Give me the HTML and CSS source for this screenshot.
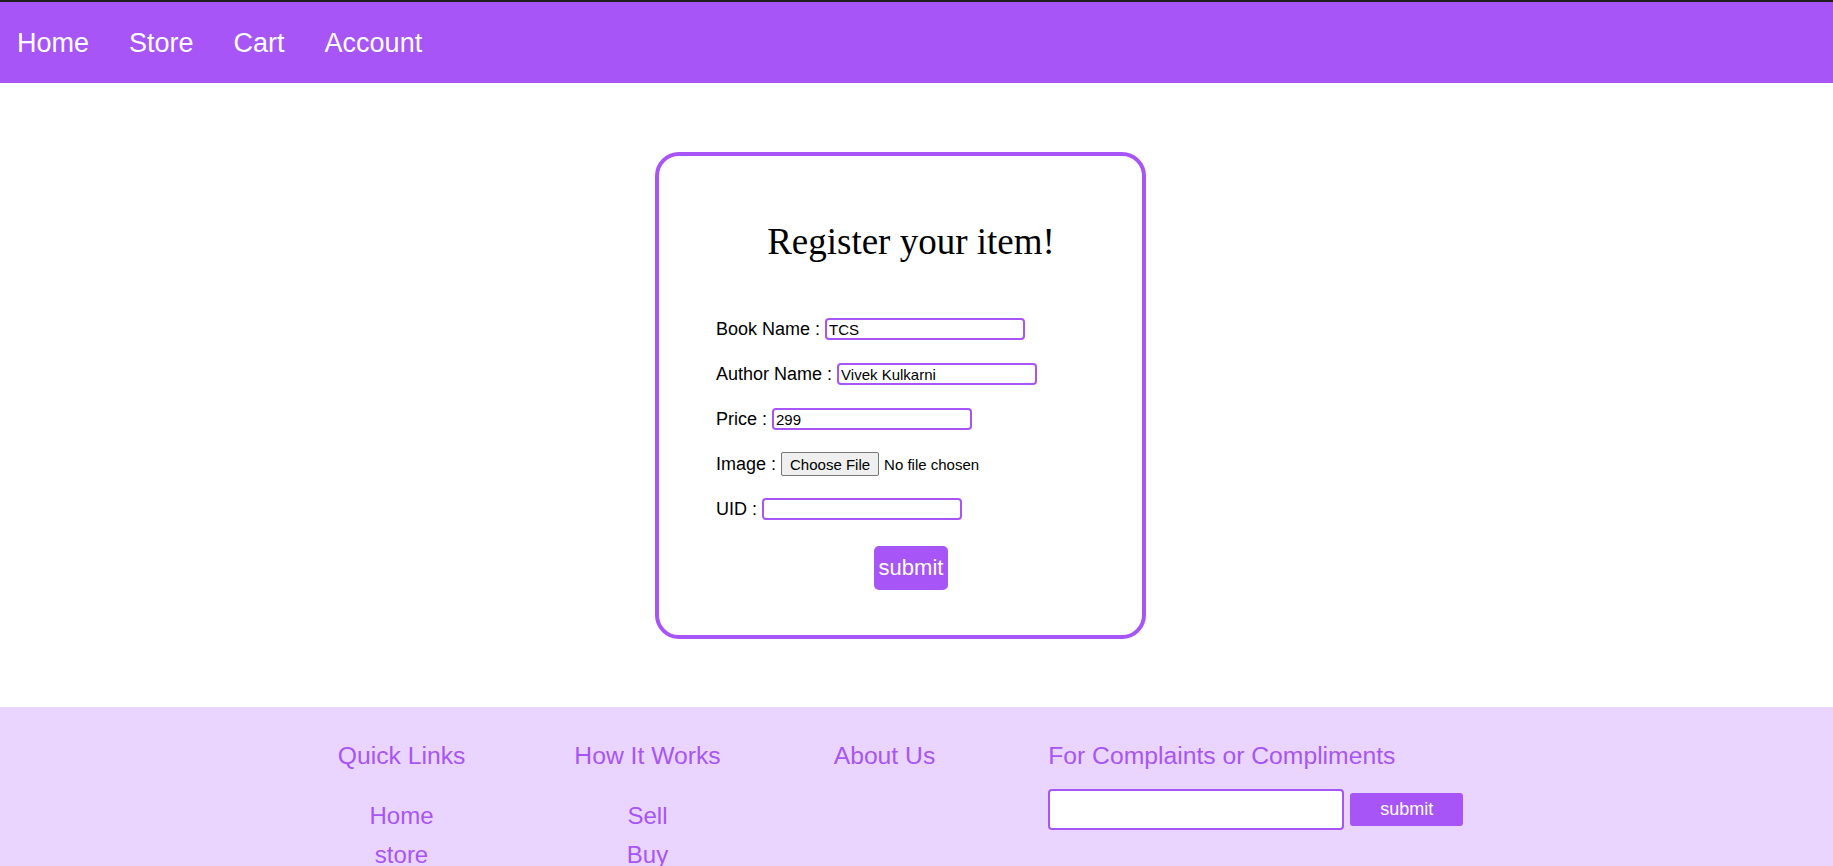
FILE: index.html
```html
<!DOCTYPE html>
<html lang="en">
<head>
<meta charset="utf-8">
<title>Register your item</title>
<link rel="stylesheet" href="styles.css">
</head>
<body>
<nav class="topnav">
  <a href="#" class="nav-link">Home</a>
  <a href="#" class="nav-link">Store</a>
  <a href="#" class="nav-link">Cart</a>
  <a href="#" class="nav-link">Account</a>
</nav>

<main class="main">
  <form class="card">
    <h2 class="card-title">Register your item!</h2>
    <div class="row"><label class="lbl">Book Name :</label><input class="field" type="text" value="TCS"></div>
    <div class="row"><label class="lbl">Author Name :</label><input class="field" type="text" value="Vivek Kulkarni"></div>
    <div class="row"><label class="lbl">Price :</label><input class="field" type="text" value="299"></div>
    <div class="row"><label class="lbl">Image :</label><input class="file" type="file"></div>
    <div class="row"><label class="lbl">UID :</label><input class="field" type="text" value=""></div>
    <div class="actions"><button class="btn-submit" type="button">submit</button></div>
  </form>
</main>

<footer class="footer">
  <div class="fcol fcol-1">
    <h3 class="fhead">Quick Links</h3>
    <ul class="flist">
      <li><a href="#" class="flink">Home</a></li>
      <li><a href="#" class="flink">store</a></li>
    </ul>
  </div>
  <div class="fcol fcol-2">
    <h3 class="fhead">How It Works</h3>
    <ul class="flist">
      <li><a href="#" class="flink">Sell</a></li>
      <li><a href="#" class="flink">Buy</a></li>
    </ul>
  </div>
  <div class="fcol fcol-3">
    <h3 class="fhead">About Us</h3>
  </div>
  <div class="fcol fcol-4">
    <h3 class="fhead fhead-left">For Complaints or Compliments</h3>
    <div class="complaint">
      <input class="complaint-input" type="text">
      <button class="complaint-btn" type="button">submit</button>
    </div>
  </div>
</footer>
</body>
</html>
```

FILE: styles.css
```css
html, body {
  margin: 0;
  padding: 0;
  background: #ffffff;
  font-family: "Liberation Sans", Arial, sans-serif;
}

.topnav {
  display: flex;
  align-items: center;
  gap: 40px;
  height: 81px;
  padding-left: 17px;
  background: #a855f7;
  border-top: 2px solid #1f1f1f;
}

.nav-link {
  color: #ffffff;
  text-decoration: none;
  font-size: 27px;
  line-height: 31px;
  padding-top: 2px;
}

.main {
  display: flex;
  justify-content: center;
  padding: 69px 32px 68px 0;
}

.card {
  width: 390px;
  border: 4px solid #a855f7;
  border-radius: 24px;
  padding: 65px 36px 45px 57px;
  margin: 0;
}

.card-title {
  margin: 0 0 56px 0;
  font-family: "Liberation Serif", "Times New Roman", serif;
  font-weight: normal;
  font-size: 37px;
  line-height: 41px;
  text-align: center;
  color: #000000;
}

.row {
  display: flex;
  align-items: center;
  gap: 5px;
  height: 22px;
  margin-bottom: 23px;
}

.row:last-of-type {
  margin-bottom: 0;
}

.lbl {
  font-size: 18px;
  color: #000000;
  white-space: nowrap;
}

.field {
  box-sizing: border-box;
  width: 200px;
  height: 22px;
  padding: 0 2px;
  border: 2px solid #a855f7;
  border-radius: 4px;
  font-family: "Liberation Sans", Arial, sans-serif;
  font-size: 15px;
  color: #000000;
  outline: none;
}

.file {
  font-family: "Liberation Sans", Arial, sans-serif;
  font-size: 15px;
  color: #000000;
}

.file::file-selector-button {
  font-family: "Liberation Sans", Arial, sans-serif;
  font-size: 15px;
  height: 24px;
  padding: 0 8px;
  margin-right: 5px;
  border: 1px solid #767676;
  border-radius: 2px;
  background: #efefef;
  color: #000000;
}

.actions {
  display: flex;
  justify-content: center;
  margin-top: 26px;
}

.btn-submit {
  border: none;
  border-radius: 5px;
  background: #a855f7;
  color: #ffffff;
  font-family: "Liberation Sans", Arial, sans-serif;
  font-size: 22px;
  line-height: 26px;
  padding: 9px 5px;
}

.footer {
  display: flex;
  justify-content: center;
  align-items: flex-start;
  gap: 113px;
  background: #e9d5ff;
  padding: 35px 32px 40px 0;
  min-height: 120px;
}

.fcol {
  display: flex;
  flex-direction: column;
  align-items: center;
}

.fcol-2 {
  margin-left: -4px;
}

.fcol-4 {
  align-items: flex-start;
}

.fhead {
  margin: 0;
  font-weight: normal;
  font-size: 24.7px;
  line-height: 28px;
  color: #a855f7;
  white-space: nowrap;
}

.flist {
  list-style: none;
  margin: 26px 0 0 0;
  padding: 0;
  text-align: center;
}

.flink {
  color: #a855f7;
  text-decoration: none;
  font-size: 24px;
  line-height: 39px;
}

.complaint {
  display: flex;
  align-items: center;
  gap: 6px;
  margin-top: 19px;
}

.complaint-input {
  box-sizing: border-box;
  width: 296px;
  height: 41px;
  border: 2px solid #a855f7;
  border-radius: 4px;
  background: #ffffff;
  outline: none;
}

.complaint-btn {
  box-sizing: border-box;
  width: 113px;
  height: 33px;
  border: none;
  border-radius: 3px;
  background: #a855f7;
  color: #ffffff;
  font-family: "Liberation Sans", Arial, sans-serif;
  font-size: 18px;
}
```
